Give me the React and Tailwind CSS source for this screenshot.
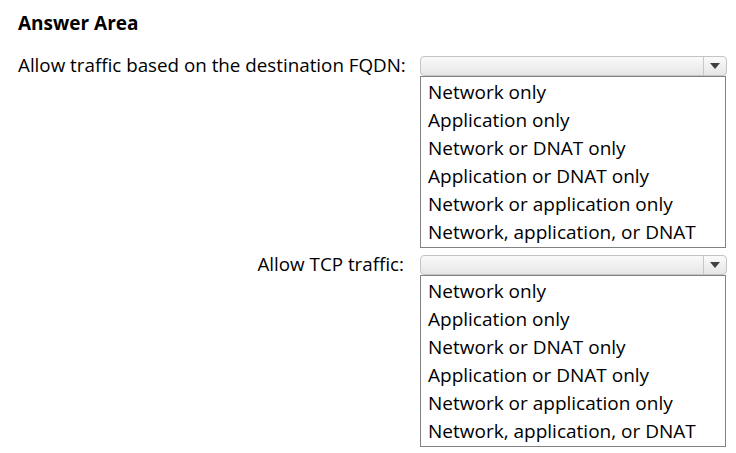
import React from 'react';

const options = [
  'Network only',
  'Application only',
  'Network or DNAT only',
  'Application or DNAT only',
  'Network or application only',
  'Network, application, or DNAT',
];

const Dropdown = () => (
  <div className="w-[307px]">
    {/* closed select */}
    <div className="flex h-[20px] rounded-[4px] border border-[#c4c4c4] bg-gradient-to-b from-[#fafafa] to-[#e6e6e6]">
      <div className="flex-1" />
      <div className="flex w-[23px] items-center justify-center border-l border-[#c8c8c8]">
        <svg width="10" height="6" viewBox="0 0 10 6">
          <path d="M0 0 H10 L5 6 Z" fill="#404040" />
        </svg>
      </div>
    </div>
    {/* option list */}
    <div className="mr-[1px] border border-[#828282] bg-white px-[7px] py-[1px] text-[19px]">
      {options.map((o) => (
        <div key={o} className="h-[28px] leading-[28px] whitespace-nowrap">
          {o}
        </div>
      ))}
    </div>
  </div>
);

const Row = ({ label }) => (
  <div className="flex items-start">
    <div className="w-[402px] shrink-0 pr-[16px] text-right leading-[18px] whitespace-nowrap">{label}</div>
    <Dropdown />
  </div>
);

export default function App() {
  return (
    <div
      className="h-[453px] w-[736px] bg-white pl-[18px] pt-[11px] text-[18.8px] text-black"
      style={{ fontFamily: '"Open Sans", "Noto Sans", sans-serif' }}
    >
      <div className="mb-[21px] text-[19px] font-bold leading-[24px]">Answer Area</div>
      <div className="flex flex-col gap-[7px]">
        <Row label="Allow traffic based on the destination FQDN:" />
        <Row label="Allow TCP traffic:" />
      </div>
    </div>
  );
}
